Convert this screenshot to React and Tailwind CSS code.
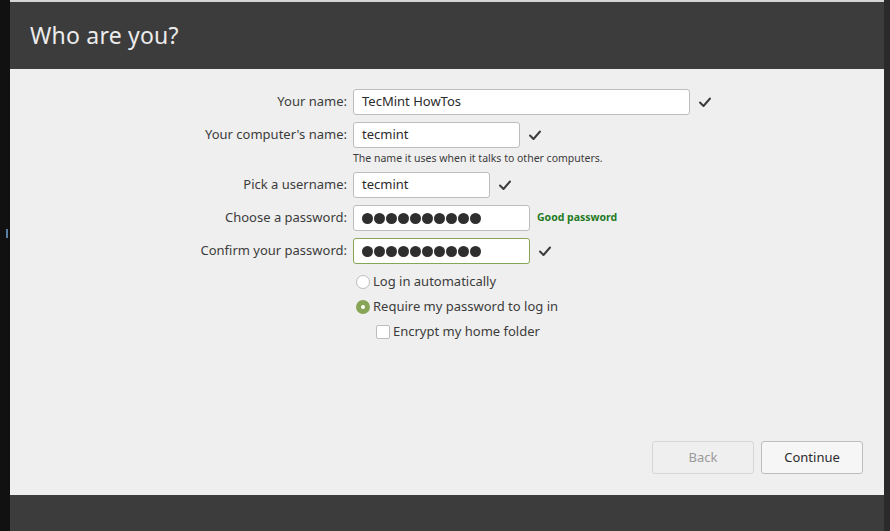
import React from 'react';

function Check({ className = '' }) {
    return (
        <svg width="14" height="14" viewBox="0 0 14 14" className={className}>
            <path d="M2 7.5 L5.5 11 L12 3.5" fill="none" stroke="#3c3c3c" strokeWidth="2" strokeLinecap="round" strokeLinejoin="round" />
        </svg>
    );
}

function Dots() {
    return (
        <div className="flex gap-[1px]">
            {Array.from({ length: 10 }).map((_, i) => (
                <span key={i} className="w-[11px] h-[11px] rounded-full bg-[#2e2e2e]" />
            ))}
        </div>
    );
}

function Field({ label, value, width, valid = true, extra, green = false, dots = false }) {
    return (
        <div className="flex items-center h-[26px]">
            <div className="w-[343px] pr-[6px] text-right text-[13px] text-[#3c3c3c]">{label}</div>
            <div
                className={`h-[26px] rounded-[3px] bg-white border flex items-center px-[8px] text-[13px] text-[#2b2b2b] ${green ? 'border-[#87a556]' : 'border-[#bdbdbd]'}`}
                style={{ width }}
            >
                {dots ? <Dots /> : value}
            </div>
            {valid && <Check className="ml-[8px]" />}
            {extra}
        </div>
    );
}

export default function App() {
    return (
        <div className="w-[890px] h-[531px] flex bg-[#111111] overflow-hidden" style={{ fontFamily: "'Noto Sans', 'Open Sans', sans-serif" }}>
            <div className="w-[10px] shrink-0 relative">
                <div className="absolute left-[6px] top-[229px] w-[2px] h-[9px] bg-[#5b7fa6]" />
            </div>
            <div className="w-[874px] flex flex-col">
                <div className="h-[2px] bg-[#d6d6d6]" />
                <div className="h-[67px] bg-[#3c3c3c] flex items-center px-[20px]">
                    <h1 className="text-[23px] text-[#ececec] tracking-[0.2px]">Who are you?</h1>
                </div>
                <div className="flex-1 bg-[#efefef] flex flex-col pt-[20px] pr-[21px] pb-[21px]">
                    <div className="flex flex-col">
                        <Field label="Your name:" value="TecMint HowTos" width={337} />
                        <div className="mt-[7px]">
                            <Field label="Your computer's name:" value="tecmint" width={167} />
                        </div>
                        <div className="pl-[343px] text-[10.5px] text-[#3c3c3c] h-[17px] pt-[3px]">
                            The name it uses when it talks to other computers.
                        </div>
                        <div className="mt-[7px]">
                            <Field label="Pick a username:" value="tecmint" width={137} />
                        </div>
                        <div className="mt-[7px]">
                            <Field
                                label="Choose a password:"
                                dots
                                width={177}
                                valid={false}
                                extra={<span className="ml-[7px] text-[10.5px] font-bold text-[#1f7a1f]">Good password</span>}
                            />
                        </div>
                        <div className="mt-[7px]">
                            <Field label="Confirm your password:" dots width={177} green />
                        </div>
                        <div className="mt-[11px] pl-[346px] flex flex-col text-[13px] text-[#3c3c3c]">
                            <div className="flex items-center h-[14px]">
                                <span className="w-[14px] h-[14px] rounded-full bg-white border border-[#bdbdbd]" />
                                <span className="ml-[3px]">Log in automatically</span>
                            </div>
                            <div className="flex items-center h-[14px] mt-[11px]">
                                <span className="w-[14px] h-[14px] rounded-full bg-[#87a556] flex items-center justify-center">
                                    <span className="w-[4px] h-[4px] rounded-full bg-white" />
                                </span>
                                <span className="ml-[3px]">Require my password to log in</span>
                            </div>
                            <div className="flex items-center h-[14px] mt-[11px] pl-[20px]">
                                <span className="w-[14px] h-[14px] rounded-[2px] bg-white border border-[#bdbdbd]" />
                                <span className="ml-[3px]">Encrypt my home folder</span>
                            </div>
                        </div>
                    </div>
                    <div className="mt-auto flex justify-end gap-[7px]">
                        <button className="w-[102px] h-[33px] rounded-[3px] border border-[#d6d6d6] bg-[#efefef] text-[13px] text-[#9a9a9a]">Back</button>
                        <button className="w-[102px] h-[33px] rounded-[3px] border border-[#bdbdbd] bg-[#f6f6f6] text-[13px] text-[#2b2b2b]">Continue</button>
                    </div>
                </div>
                <div className="h-[36px] bg-[#3c3c3c]" />
            </div>
            <div className="w-[6px] bg-[#2a2a2a]" />
        </div>
    );
}
